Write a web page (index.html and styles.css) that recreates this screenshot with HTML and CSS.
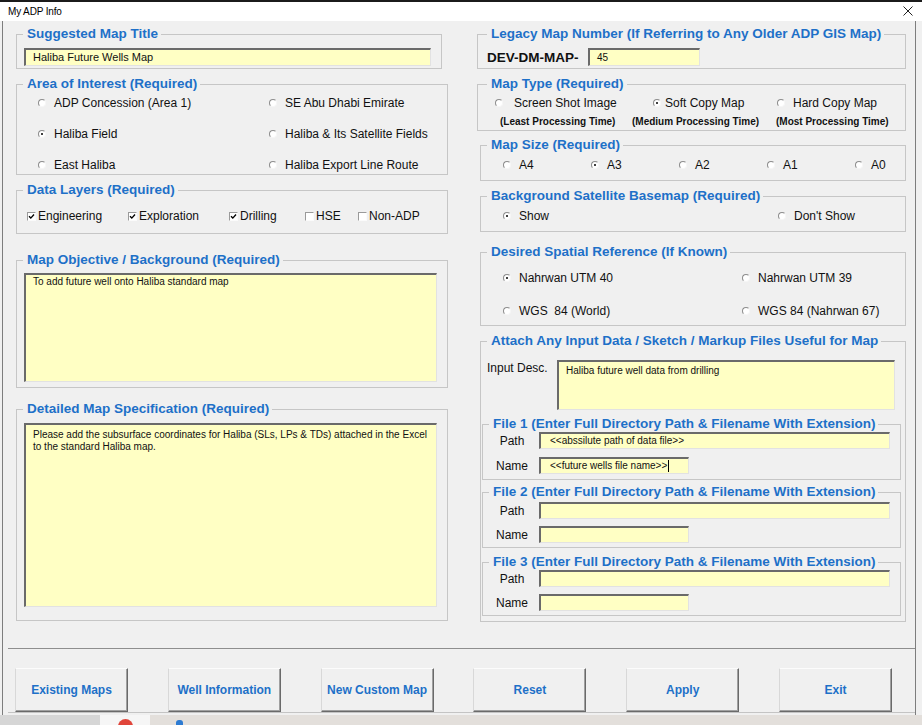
FILE: index.html
```html
<!DOCTYPE html>
<html>
<head>
<meta charset="utf-8">
<title>My ADP Info</title>
<link rel="stylesheet" href="styles.css">
</head>
<body>
<div class="window">
  <div class="titlebar">
    <span class="title">My ADP Info</span>
    <svg class="close" viewBox="0 0 10 10"><path d="M0.5 0.5L9.5 9.5M9.5 0.5L0.5 9.5" stroke="#222" stroke-width="1" fill="none"/></svg>
  </div>
  <div class="form">
    <div class="main">
      <div class="col left">
        <div class="frame f1">
          <div class="cap">Suggested Map Title</div>
          <div class="tb tb-title">Haliba Future Wells Map</div>
        </div>
        <div class="frame f2">
          <div class="cap">Area of Interest (Required)</div>
          <div class="opts area-opts">
            <div class="opt"><span class="rb"></span>ADP Concession (Area 1)</div>
            <div class="opt"><span class="rb"></span>SE Abu Dhabi Emirate</div>
            <div class="opt"><span class="rb on"></span>Haliba Field</div>
            <div class="opt"><span class="rb"></span>Haliba &amp; Its Satellite Fields</div>
            <div class="opt"><span class="rb"></span>East Haliba</div>
            <div class="opt"><span class="rb"></span>Haliba Export Line Route</div>
          </div>
        </div>
        <div class="frame f3">
          <div class="cap">Data Layers (Required)</div>
          <div class="checks">
            <div class="chk"><span class="cb"><svg viewBox="0 0 7 7"><path d="M1 3.3L2.8 5.1L6 1.5" stroke="#000" stroke-width="1.4" fill="none"/></svg></span>Engineering</div>
            <div class="chk"><span class="cb"><svg viewBox="0 0 7 7"><path d="M1 3.3L2.8 5.1L6 1.5" stroke="#000" stroke-width="1.4" fill="none"/></svg></span>Exploration</div>
            <div class="chk"><span class="cb"><svg viewBox="0 0 7 7"><path d="M1 3.3L2.8 5.1L6 1.5" stroke="#000" stroke-width="1.4" fill="none"/></svg></span>Drilling</div>
            <div class="chk"><span class="cb"></span>HSE</div>
            <div class="chk"><span class="cb"></span>Non-ADP</div>
          </div>
        </div>
        <div class="frame f4">
          <div class="cap">Map Objective / Background (Required)</div>
          <div class="tb ta-obj">To add future well onto Haliba standard map</div>
        </div>
        <div class="frame f5">
          <div class="cap">Detailed Map Specification (Required)</div>
          <div class="tb ta-spec">Please add the subsurface coordinates for Haliba (SLs, LPs &amp; TDs) attached in the Excel<br>to the standard Haliba map.</div>
        </div>
      </div>

      <div class="col right">
        <div class="frame r1 wide">
          <div class="cap">Legacy Map Number (If Referring to Any Older ADP GIS Map)</div>
          <div class="legacy-row">
            <span class="lbl-bold">DEV-DM-MAP-</span>
            <div class="tb tb-legacy">45</div>
          </div>
        </div>
        <div class="frame r2 wide">
          <div class="cap">Map Type (Required)</div>
          <div class="opts mt-opts">
            <div class="opt g11"><span class="rb"></span>Screen Shot Image</div>
            <div class="opt g4"><span class="rb on"></span>Soft Copy Map</div>
            <div class="opt"><span class="rb"></span>Hard Copy Map</div>
          </div>
          <div class="mt-sub">
            <span>(Least Processing Time)</span>
            <span>(Medium Processing Time)</span>
            <span>(Most Processing Time)</span>
          </div>
        </div>
        <div class="frame r3">
          <div class="cap">Map Size (Required)</div>
          <div class="opts size-opts">
            <div class="opt"><span class="rb"></span>A4</div>
            <div class="opt"><span class="rb on"></span>A3</div>
            <div class="opt"><span class="rb"></span>A2</div>
            <div class="opt"><span class="rb"></span>A1</div>
            <div class="opt"><span class="rb"></span>A0</div>
          </div>
        </div>
        <div class="frame r4">
          <div class="cap">Background Satellite Basemap (Required)</div>
          <div class="opts bg-opts">
            <div class="opt"><span class="rb on"></span>Show</div>
            <div class="opt"><span class="rb"></span>Don't Show</div>
          </div>
        </div>
        <div class="frame r5">
          <div class="cap">Desired Spatial Reference (If Known)</div>
          <div class="opts sr-opts">
            <div class="opt"><span class="rb on"></span>Nahrwan UTM 40</div>
            <div class="opt"><span class="rb"></span>Nahrwan UTM 39</div>
            <div class="opt"><span class="rb"></span>WGS&nbsp; 84 (World)</div>
            <div class="opt"><span class="rb"></span>WGS 84 (Nahrwan 67)</div>
          </div>
        </div>
        <div class="frame r6">
          <div class="cap">Attach Any Input Data / Sketch / Markup Files Useful for Map</div>
          <div class="desc-row">
            <span class="desc-lbl">Input Desc.</span>
            <div class="tb tb-desc">Haliba future well data from drilling</div>
          </div>
          <div class="frame ff ff1">
            <div class="cap sm">File 1 (Enter Full Directory Path &amp; Filename With Extension)</div>
            <div class="frow"><span class="flbl">Path</span><div class="tb tb-path">&lt;&lt;abssilute path of data file&gt;&gt;</div></div>
            <div class="frow name"><span class="flbl">Name</span><div class="tb tb-name">&lt;&lt;future wells file name&gt;&gt;<span class="caret"></span></div></div>
          </div>
          <div class="frame ff ff2">
            <div class="cap sm">File 2 (Enter Full Directory Path &amp; Filename With Extension)</div>
            <div class="frow first"><span class="flbl">Path</span><div class="tb tb-path"></div></div>
            <div class="frow name n7"><span class="flbl">Name</span><div class="tb tb-name"></div></div>
          </div>
          <div class="frame ff ff3">
            <div class="cap sm">File 3 (Enter Full Directory Path &amp; Filename With Extension)</div>
            <div class="frow"><span class="flbl">Path</span><div class="tb tb-path"></div></div>
            <div class="frow name n7"><span class="flbl">Name</span><div class="tb tb-name"></div></div>
          </div>
        </div>
      </div>
    </div>

    <div class="btnbar">
      <div class="btn">Existing Maps</div>
      <div class="btn">Well Information</div>
      <div class="btn">New Custom Map</div>
      <div class="btn">Reset</div>
      <div class="btn">Apply</div>
      <div class="btn">Exit</div>
    </div>
  </div>
  <div class="taskbar">
    <div class="seg seg1"></div>
    <div class="seg seg2"><span class="ico-red"></span></div>
    <div class="seg seg3"><span class="ico-blue"></span></div>
  </div>
</div>
</body>
</html>
```

FILE: styles.css
```css
html, body {
  margin: 0;
  padding: 0;
}
body {
  background: #f0f0f0;
  font-family: "Liberation Sans", Arial, sans-serif;
  color: #111;
}
.window {
  width: 922px;
  height: 725px;
  overflow: hidden;
  display: flex;
  flex-direction: column;
  background: #f0f0f0;
}

/* title bar */
.titlebar {
  flex: none;
  height: 21px;
  box-sizing: border-box;
  border-top: 2px solid #1b1b1b;
  background: #fff;
  display: flex;
  align-items: center;
  justify-content: space-between;
  padding: 0 9px 0 8px;
}
.title {
  font-size: 10px;
  color: #000;
  letter-spacing: -0.15px;
}
.close {
  width: 10px;
  height: 10px;
  margin-top: -2px;
}

/* form body */
.form {
  flex: none;
  height: 694px;
  margin: 0 6px 0 2px;
  border-left: 1px solid #7d7d7d;
  border-right: 1px solid #7d7d7d;
  display: flex;
  flex-direction: column;
}
.main {
  flex: none;
  height: 627px;
  box-sizing: border-box;
  padding: 13px 0 0 13px;
  display: flex;
  gap: 29px;
}
.col {
  display: flex;
  flex-direction: column;
}
.left { width: 432px; }
.right { width: 429px; align-items: flex-end; }

/* frames */
.frame {
  flex: none;
  box-sizing: border-box;
  border: 1px solid #c6c6c6;
}
.cap {
  width: fit-content;
  height: 18px;
  line-height: 18px;
  margin: -10px 0 0 6px;
  padding: 0 3px 0 4px;
  background: #f0f0f0;
  color: #1e70c8;
  font-weight: bold;
  font-size: 13.5px;
  white-space: nowrap;
}
.cap.sm {
  height: 16px;
  line-height: 16px;
  margin-top: -9px;
}
.wide .cap { margin-left: 9px; }

.f1 { width: 426px; height: 35px; }
.f2 { width: 432px; height: 91px; margin-top: 15px; }
.f3 { width: 432px; height: 44px; margin-top: 15px; }
.f4 { width: 432px; height: 128px; margin-top: 26px; }
.f5 { width: 432px; height: 212px; margin-top: 21px; }

.r1 { width: 429px; height: 35px; }
.r2 { width: 429px; height: 47px; margin-top: 15px; }
.r3 { width: 426px; height: 36px; margin-top: 14px; }
.r4 { width: 426px; height: 36px; margin-top: 15px; }
.r5 { width: 426px; height: 74px; margin-top: 20px; }
.r6 { width: 426px; height: 281px; margin-top: 15px; }

/* text boxes */
.tb {
  box-sizing: border-box;
  background: #ffffc4;
  border-style: solid;
  border-width: 2px 1px 1px 2px;
  border-color: #6a6a6a #e2e2e2 #e2e2e2 #6a6a6a;
  font-size: 10px;
  line-height: 12px;
  color: #111;
  white-space: nowrap;
  overflow: hidden;
}
.tb-title {
  margin: 5px 0 0 7px;
  width: 407px;
  height: 18px;
  padding-left: 7px;
  font-size: 11px;
  line-height: 15px;
}
.ta-obj {
  margin: 4px 0 0 7px;
  width: 413px;
  height: 109px;
  padding: 1px 0 0 7px;
}
.ta-spec {
  margin: 5px 0 0 7px;
  width: 413px;
  height: 184px;
  padding: 4px 0 0 7px;
}

/* options */
.opts {
  display: grid;
  grid-auto-rows: 16px;
}
.opt {
  display: flex;
  align-items: center;
  height: 16px;
  font-size: 12px;
  color: #111;
  white-space: nowrap;
}
.rb {
  flex: none;
  position: relative;
  width: 8px;
  height: 8px;
  box-sizing: border-box;
  border-radius: 50%;
  border: 1px solid;
  border-color: #8c8c8c #f6f6f6 #f6f6f6 #8c8c8c;
  background: #fff;
  margin-right: 8px;
}
.rb.on::after {
  content: "";
  position: absolute;
  left: 2px;
  top: 2px;
  width: 2px;
  height: 2px;
  border-radius: 50%;
  background: #000;
}
.opt.g11 .rb { margin-right: 11px; }
.opt.g4 .rb { margin-right: 4px; }

.area-opts {
  grid-template-columns: 231px auto;
  row-gap: 15px;
  margin-top: 2px;
  padding-left: 21px;
}

.checks {
  display: grid;
  grid-template-columns: 101px 101px 76px 53px auto;
  height: 16px;
  margin-top: 9px;
  padding-left: 10px;
}
.chk {
  display: flex;
  align-items: center;
  font-size: 12px;
  color: #111;
  white-space: nowrap;
}
.cb {
  flex: none;
  width: 9px;
  height: 9px;
  box-sizing: border-box;
  border: 1px solid;
  border-color: #9a9a9a #fbfbfb #fbfbfb #9a9a9a;
  background: #fff;
  margin-right: 2px;
  display: flex;
}
.cb svg {
  width: 7px;
  height: 7px;
}

/* right column contents */
.legacy-row {
  display: flex;
  align-items: center;
  height: 18px;
  margin-top: 5px;
  padding-left: 9px;
}
.lbl-bold {
  width: 101px;
  font-weight: bold;
  font-size: 13.5px;
  color: #111;
  white-space: nowrap;
}
.tb-legacy {
  width: 112px;
  height: 18px;
  padding-left: 7px;
  line-height: 15px;
}
.mt-opts {
  grid-template-columns: 158px 124px auto;
  margin-top: 2px;
  padding-left: 17px;
}
.mt-sub {
  display: grid;
  grid-template-columns: 132px 144px auto;
  margin-top: 5px;
  padding-left: 22px;
  font-size: 10px;
  line-height: 12px;
  font-weight: bold;
  color: #111;
  white-space: nowrap;
}
.size-opts {
  grid-template-columns: repeat(5, 88px);
  margin-top: 3px;
  padding-left: 22px;
}
.bg-opts {
  grid-template-columns: 275px auto;
  margin-top: 3px;
  padding-left: 22px;
}
.sr-opts {
  grid-template-columns: 239px auto;
  row-gap: 17px;
  margin-top: 9px;
  padding-left: 22px;
}
.desc-row {
  display: flex;
  margin-top: 10px;
  padding-left: 6px;
}
.desc-lbl {
  width: 70px;
  font-size: 12px;
  line-height: 16px;
  white-space: nowrap;
}
.tb-desc {
  width: 338px;
  height: 50px;
  padding: 3px 0 0 7px;
}

/* file sub-frames */
.ff {
  width: 419px;
  height: 56px;
  margin-left: 1px;
}
.ff1 { margin-top: 14px; }
.ff2 { margin-top: 12px; }
.ff3 { margin-top: 14px; height: 54px; }
.frow {
  display: flex;
  align-items: center;
  height: 17px;
  padding-left: 2px;
}
.frow.first { margin-top: 2px; }
.frow.name { margin-top: 8px; }
.frow.name.n7 { margin-top: 7px; }
.flbl {
  width: 54px;
  text-align: center;
  font-size: 12px;
  color: #111;
}
.tb-path,
.tb-name {
  height: 17px;
  padding-left: 9px;
  line-height: 14px;
}
.tb-path { width: 351px; }
.tb-name { width: 150px; }
.caret {
  display: inline-block;
  width: 1px;
  height: 12px;
  margin-left: 1px;
  background: #000;
  vertical-align: middle;
}

/* buttons */
.btnbar {
  flex: none;
  margin-left: 5px;
  border-top: 1px solid #8e8e8e;
  box-shadow: 0 1px 0 #c4c4c4;
  padding: 19px 0 0 7px;
  display: flex;
  gap: 39.8px;
}
.btn {
  flex: none;
  width: 113px;
  height: 44px;
  box-sizing: border-box;
  border: 1px solid;
  border-color: #fcfcfc #6a6a6a #6a6a6a #d8d8d8;
  box-shadow: inset -1px -1px 0 #a0a0a0;
  background: #f0f0f0;
  display: flex;
  align-items: center;
  justify-content: center;
  font-weight: bold;
  font-size: 12px;
  color: #1e70c8;
  white-space: nowrap;
}

/* bottom strip */
.taskbar {
  flex: none;
  height: 10px;
  display: flex;
  overflow: hidden;
}
.seg { height: 10px; overflow: hidden; }
.seg1 { width: 100px; background: #d6d6d6; }
.seg2 { width: 50px; background: #f6f6f6; }
.seg3 { flex: 1; background: #e3dfdb; }
.ico-red {
  display: block;
  width: 15px;
  height: 15px;
  margin: 4px 0 0 18px;
  border-radius: 50%;
  background: #e0453a;
}
.ico-blue {
  display: block;
  width: 7px;
  height: 8px;
  margin: 5px 0 0 26px;
  border-radius: 3px 3px 0 0;
  background: #2d7bd2;
}
```
